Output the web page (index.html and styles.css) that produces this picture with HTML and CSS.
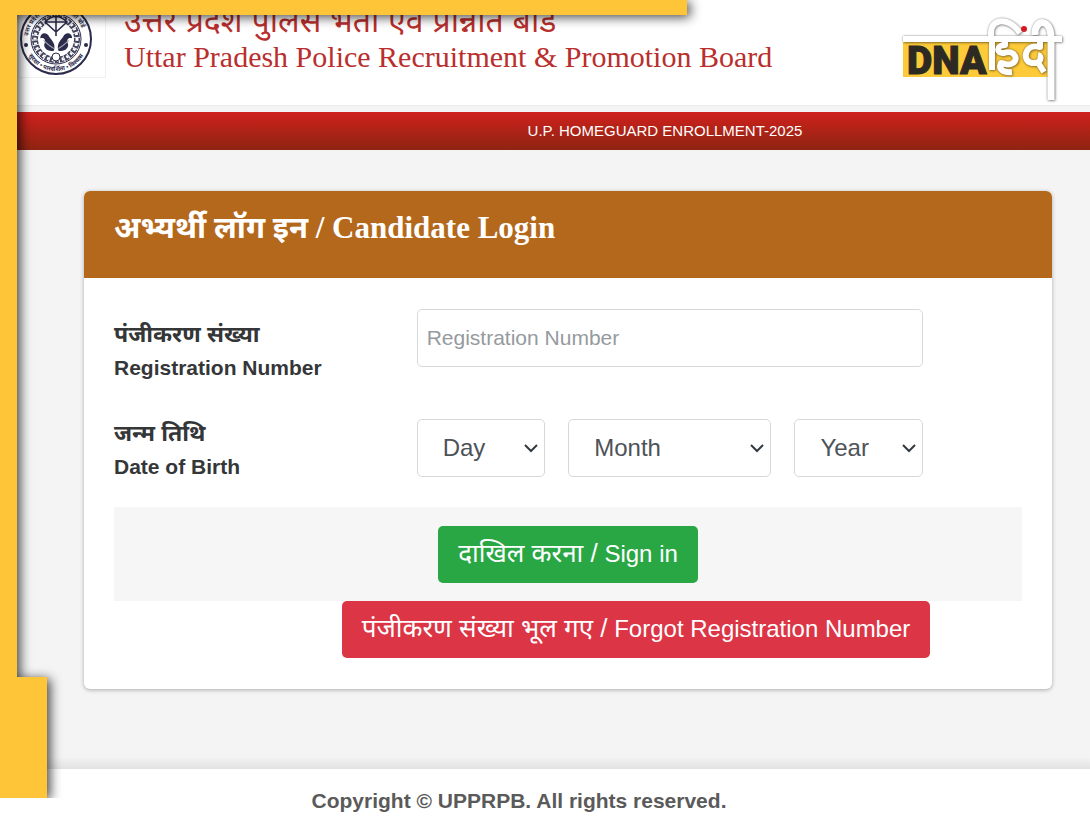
FILE: index.html
```html
<!DOCTYPE html>
<html lang="hi">

<head>
    <meta charset="utf-8">
    <meta name="viewport" content="width=device-width, initial-scale=1">
    <title>Candidate Login</title>
    <link rel="stylesheet" href="styles.css">
</head>

<body>
    <header class="header">
        <div class="emblem">
            <svg viewBox="0 0 74 74" width="74" height="74" aria-hidden="true">
                <defs>
                    <path id="ring-left" d="M9 37 A28 28 0 0 1 37 9"></path>
                    <path id="ring-right" d="M37 9 A28 28 0 0 1 65 37"></path>
                    <path id="ring-bottom" d="M5 37 A32 32 0 0 0 69 37"></path>
                </defs>
                <circle cx="37" cy="37" r="35" fill="#fff" stroke="#2b2b4c" stroke-width="2"></circle>
                <circle cx="37" cy="37" r="25" fill="none" stroke="#2b2b4c" stroke-width="1"></circle>
                <circle cx="37" cy="37" r="21" fill="none" stroke="#44445f" stroke-width="6" stroke-dasharray="4 1"></circle>
                <circle cx="37" cy="37" r="21" fill="none" stroke="#fff" stroke-width="3" stroke-dasharray="2 3"></circle>
                <circle cx="37" cy="37" r="17" fill="#fff"></circle>
                <g class="emblem-text">
                    <text><textPath href="#ring-left" startOffset="3">उत्तर प्रदेश</textPath></text>
                    <text><textPath href="#ring-right" startOffset="12">भर्ती बोर्ड</textPath></text>
                    <text><textPath href="#ring-bottom" startOffset="50%" text-anchor="middle">सुरक्षा • पारदर्शिता • विश्वास</textPath></text>
                </g>
                <circle cx="7" cy="43" r="2" fill="#2b2b4c"></circle>
                <circle cx="67" cy="43" r="2" fill="#2b2b4c"></circle>
                <path d="M26 20 Q37 9 48 20 L37 30 Z M37 10 V34 M26 20 H48 M34 14 L37 10 L40 14" fill="#fff" stroke="#2b2b4c" stroke-width="1.6"></path>
                <g transform="translate(-5 -6) scale(1.14)">
                    <path d="M35 48 C37 42 33 39 31 36 C29 31 23 32 23 37 C26 36 28 38 27 41 C25 45 29 49 35 48 Z" fill="#2b2b4c"></path>
                    <path d="M39 48 C37 42 41 39 43 36 C45 31 51 32 51 37 C48 36 46 38 47 41 C49 45 45 49 39 48 Z" fill="#2b2b4c"></path>
                    <path d="M26 39 Q31 44 35 46 M48 39 Q43 44 39 46" fill="none" stroke="#a5a5b5" stroke-width="1"></path>
                </g>
                <circle cx="37" cy="55" r="4" fill="#fff" stroke="#2b2b4c"></circle>
            </svg>
        </div>
        <div class="board-name">
            <p class="board-hi" lang="hi">उत्तर प्रदेश पुलिस भर्ती एवं प्रोन्नति बोर्ड</p>
            <p class="board-en" lang="en">Uttar Pradesh Police Recruitment &amp; Promotion Board</p>
        </div>
        <svg class="dna-logo" viewBox="0 0 164 86" width="164" height="86" role="img" aria-label="DNA हिंदी">
            <rect x="3" y="20" width="145" height="41" fill="#fdca3a"></rect>
            <text class="dna-word" x="7" y="58">DNA</text>
            <g class="dna-hindi">
                <path d="M3 23 H162"></path>
                <path d="M92 22 V54 M92 24 C86 2 108 -1 120 17"></path>
                <path d="M105 24 V29 C96 29 96 38 104 37 C115 33 120 45 111 48 C105 50 102 46 101 47 C98 53 103 57 112 56"></path>
                <path d="M140 24 V31 C125 27 121 45 132 47 C141 48 143 40 138 39 M137 45 L144 56"></path>
                <path class="stem" d="M135 19 C134 3 151 1 151 22 V84"></path>
            </g>
            <circle cx="124" cy="13" r="3" fill="#d71920"></circle>
        </svg>
    </header>

    <div class="title-bar">U.P. HOMEGUARD ENROLLMENT-2025</div>

    <main class="main">
        <form class="card">
            <h1 class="card-title">अभ्यर्थी लॉग इन / Candidate Login</h1>
            <div class="card-body">
                <div class="row">
                    <label class="label" for="reg"><span class="label-hi">पंजीकरण संख्या</span>Registration Number</label>
                    <input class="control" id="reg" type="text" placeholder="Registration Number">
                </div>
                <div class="row row-dob">
                    <label class="label" for="day"><span class="label-hi">जन्म तिथि</span>Date of Birth</label>
                    <div class="dob">
                        <select class="control select" id="day" aria-label="Day">
                            <option>Day</option>
                        </select>
                        <select class="control select" id="month" aria-label="Month">
                            <option>Month</option>
                        </select>
                        <select class="control select" id="year" aria-label="Year">
                            <option>Year</option>
                        </select>
                    </div>
                </div>
                <div class="sign-in">
                    <button class="btn btn-green" type="submit"><span class="btn-hi">दाखिल करना /</span> Sign in</button>
                </div>
                <div class="forgot">
                    <button class="btn btn-red" type="button"><span class="btn-hi">पंजीकरण संख्या भूल गए /</span> Forgot Registration Number</button>
                </div>
            </div>
        </form>
    </main>

    <footer class="footer">Copyright © UPPRPB. All rights reserved.</footer>

    <!-- yellow frame over the page edges -->
    <div class="frame">
        <div class="frame-shape">
            <div class="frame-top"></div>
            <div class="frame-left"></div>
            <div class="frame-foot"></div>
        </div>
    </div>
</body>

</html>
```

FILE: styles.css
```css
* {
    box-sizing: border-box;
}

body {
    margin: 0;
    min-height: 100vh;
    position: relative;
    display: flex;
    flex-direction: column;
    overflow: hidden;
    background-color: #f4f4f4;
    color: #343638;
    font-family: "Liberation Sans", "Noto Sans", "Noto Sans Devanagari", sans-serif;
}

p {
    margin: 0;
}

.header {
    height: 106px;
    display: flex;
    align-items: flex-start;
    padding: 2px 26px 0 18px;
    background-color: white;
    border-bottom: 1px solid #e9edea;
}

.emblem {
    width: 88px;
    height: 76px;
    border: 1px solid #f0f0f0;
    border-top: none;
}

.emblem svg {
    display: block;
}

.emblem-text {
    font-size: 6px;
    font-weight: bold;
    fill: #2b2b4c;
}

.board-name {
    flex: 1;
    padding-left: 18px;
    color: #b92f2d;
    white-space: nowrap;
}

.board-hi {
    font-size: 32px;
    line-height: 38px;
}

.board-en {
    font-family: "Liberation Serif", serif;
    font-size: 30px;
    line-height: 34px;
}

.dna-logo {
    margin-top: 14px;
    overflow: visible;
}

.dna-word {
    font-family: Roboto, "Liberation Sans", sans-serif;
    font-size: 39px;
    font-weight: 900;
    fill: #2c2a22;
    stroke: #2c2a22;
}

.dna-hindi {
    fill: none;
    stroke: white;
    stroke-width: 6;
    stroke-linejoin: round;
    filter: drop-shadow(0 0 1px rgba(0, 0, 0, 0.4)) drop-shadow(1px 1px 1px rgba(0, 0, 0, 0.3));
}

.dna-hindi .stem {
    stroke-width: 7;
}

.title-bar {
    margin-top: 6px;
    padding-left: 240px;
    height: 38px;
    line-height: 37px;
    text-align: center;
    font-size: 15px;
    color: white;
    background: linear-gradient(#d0211c, #8d2411);
}

.main {
    flex: 1;
    padding: 41px 38px 80px 84px;
    background: linear-gradient(transparent calc(100% - 12px), #e2e2e2);
}

.card {
    background-color: white;
    border-radius: 6px;
    box-shadow: 0 1px 4px rgba(0, 0, 0, 0.3);
}

.card-title {
    margin: 0;
    height: 87px;
    padding: 16px 30px;
    border-radius: 6px 6px 0 0;
    background-color: #b4681c;
    color: white;
    font-family: "Liberation Serif", "Noto Sans", "Noto Sans Devanagari", serif;
    font-size: 31px;
    line-height: 42px;
}

.card-body {
    padding: 31px 30px;
}

.row {
    display: grid;
    grid-template-columns: 4fr 8fr;
    align-items: start;
    min-height: 99px;
}

.row-dob {
    align-items: center;
    padding-bottom: 20px;
}

.row .control,
.dob {
    margin-right: 99px;
}

.label {
    padding-top: 9px;
    font-size: 21px;
    font-weight: bold;
    line-height: 33px;
}

.row-dob .label {
    padding-top: 4px;
}

.label-hi {
    display: block;
    font-size: 23px;
}

.control {
    height: 58px;
    min-width: 0;
    padding: 0 9px;
    border: 1px solid #d6d9dc;
    border-radius: 5px;
    background-color: white;
    color: #4d5358;
    font-family: inherit;
    font-size: 21px;
}

.control::placeholder {
    color: #959a9e;
}

.dob {
    display: grid;
    grid-template-columns: 129fr 204fr 129fr;
    gap: 23px;
}

.dob .select {
    margin: 0;
    padding-left: 25px;
    font-size: 24px;
    appearance: none;
    background: white url("data:image/svg+xml,%3Csvg xmlns='http://www.w3.org/2000/svg' width='14' height='10' fill='none' stroke='%23343a40' stroke-width='2'%3E%3Cpath d='M1 2l6 6 6-6'/%3E%3C/svg%3E") no-repeat right 6px center;
}

.sign-in {
    padding: 19px 0 18px;
    text-align: center;
    background-color: #f6f6f6;
}

.forgot {
    padding-left: 136px;
    text-align: center;
}

.btn {
    display: inline-block;
    vertical-align: top;
    height: 57px;
    padding: 0 20px 5px;
    border: none;
    border-radius: 5px;
    color: white;
    font-family: inherit;
    font-size: 24px;
    white-space: nowrap;
}

.btn-hi {
    font-size: 26px;
}

.btn-green {
    background-color: #29a745;
}

.btn-red {
    background-color: #dc3546;
}

.footer {
    height: 49px;
    padding: 18px 52px 0 0;
    overflow: hidden;
    text-align: center;
    font-size: 21px;
    font-weight: bold;
    line-height: 28px;
    color: #5a5a5a;
    background-color: white;
}

.frame {
    position: absolute;
    top: 0;
    right: 0;
    bottom: 20px;
    left: 0;
    overflow: hidden;
    pointer-events: none;
}

.frame-shape {
    display: flex;
    flex-direction: column;
    align-items: flex-start;
    height: 100%;
    filter: drop-shadow(3px 2px 6px rgba(0, 0, 0, 0.75));
}

.frame-top {
    width: 63%;
    height: 15px;
    background-color: #fec538;
}

.frame-left {
    flex: 1;
    width: 17px;
    background-color: #fec538;
}

.frame-foot {
    width: 47px;
    height: 121px;
    background-color: #fec538;
}
```
